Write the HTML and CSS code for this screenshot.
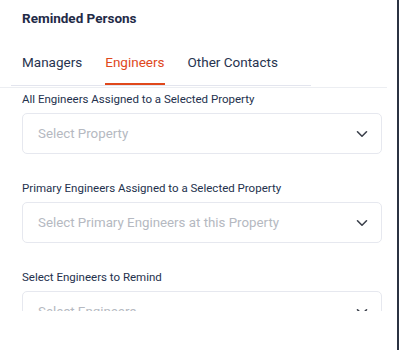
FILE: index.html
```html
<!DOCTYPE html>
<html lang="en">
<head>
    <meta charset="UTF-8">
    <meta name="viewport" content="width=device-width, initial-scale=1.0">
    <title>Reminded Persons</title>
    <link rel="stylesheet" href="styles.css">
</head>
<body>
    <div class="panel">
        <h2 class="title">Reminded Persons</h2>
        <div class="tabs">
            <span class="tab">Managers</span>
            <span class="tab active">Engineers</span>
            <span class="tab">Other Contacts</span>
        </div>
        <div class="divider"></div>

        <div class="content">
            <div class="field">
                <label class="label">All Engineers Assigned to a Selected Property</label>
                <div class="select">
                    <span class="placeholder">Select Property</span>
                    <svg class="chevron" width="12" height="8" viewBox="0 0 12 8"><path d="M1.5 1.8 6 6.2 10.5 1.8" fill="none" stroke="#3b404b" stroke-width="1.6" stroke-linecap="round" stroke-linejoin="round"/></svg>
                </div>
            </div>
            <div class="field">
                <label class="label">Primary Engineers Assigned to a Selected Property</label>
                <div class="select">
                    <span class="placeholder">Select Primary Engineers at this Property</span>
                    <svg class="chevron" width="12" height="8" viewBox="0 0 12 8"><path d="M1.5 1.8 6 6.2 10.5 1.8" fill="none" stroke="#3b404b" stroke-width="1.6" stroke-linecap="round" stroke-linejoin="round"/></svg>
                </div>
            </div>
            <div class="field">
                <label class="label">Select Engineers to Remind</label>
                <div class="select">
                    <span class="placeholder">Select Engineers</span>
                    <svg class="chevron" width="12" height="8" viewBox="0 0 12 8"><path d="M1.5 1.8 6 6.2 10.5 1.8" fill="none" stroke="#3b404b" stroke-width="1.6" stroke-linecap="round" stroke-linejoin="round"/></svg>
                </div>
            </div>
        </div>
    </div>
</body>
</html>
```

FILE: styles.css
```css
body {
    margin: 0;
    background: #ffffff;
    font-family: Roboto, 'Liberation Sans', sans-serif;
    color: #24314d;
}
.panel {
    width: 397px;
    height: 350px;
    border-right: 2px solid #2b3242;
    overflow: hidden;
}
.title {
    margin: 0;
    padding: 10px 22px 0;
    font-size: 13.5px;
    line-height: 16px;
    font-weight: 700;
    color: #1f2b47;
}
.tabs {
    display: flex;
    gap: 23px;
    width: 289px;
    margin: 27px 0 0 11px;
    padding-left: 11px;
    border-bottom: 1px solid #e3e5ee;
}
.tab {
    font-size: 13.5px;
    line-height: 18px;
    padding-bottom: 12px;
    border-bottom: 2px solid transparent;
    color: #27334f;
}
.tab.active {
    color: #e0481b;
    border-bottom-color: #e0481b;
}
.divider {
    width: 387px;
    height: 1px;
    margin-top: 1px;
    background: #eceef2;
}
.content {
    height: 223px;
    overflow: hidden;
    padding: 3px 0 0 22px;
    box-sizing: border-box;
}
.field {
    margin-bottom: 26px;
}
.label {
    display: block;
    font-size: 11.5px;
    line-height: 16px;
    margin-bottom: 6px;
    color: #24314d;
}
.select {
    width: 360px;
    height: 41px;
    box-sizing: border-box;
    border: 1px solid #e6e8ef;
    border-radius: 5px;
    display: flex;
    align-items: center;
    justify-content: space-between;
    padding: 0 13px 0 15px;
}
.placeholder {
    font-size: 13.3px;
    color: #b5b9c1;
}
.chevron {
    display: block;
}
```
